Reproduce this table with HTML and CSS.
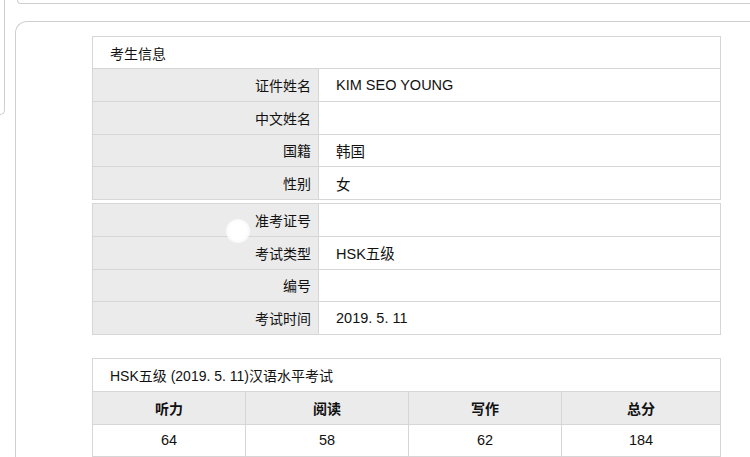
FILE: index.html
```html
<!DOCTYPE html>
<html lang="zh">
<head>
<meta charset="utf-8">
<title>考生信息</title>
<link rel="stylesheet" href="styles.css">
</head>
<body>
<div class="page">
  <div class="side-piece"></div>
  <div class="main">
    <div class="top-strip"></div>
    <div class="card">
      <table class="info">
        <colgroup><col class="lc"><col class="vc"></colgroup>
        <tr><th class="caption" colspan="2">考生信息</th></tr>
        <tr><td class="label">证件姓名</td><td class="value">KIM SEO YOUNG</td></tr>
        <tr><td class="label">中文姓名</td><td class="value"></td></tr>
        <tr><td class="label">国籍</td><td class="value">韩国</td></tr>
        <tr><td class="label">性别</td><td class="value">女</td></tr>
      </table>
      <table class="info info-second">
        <colgroup><col class="lc"><col class="vc"></colgroup>
        <tr><td class="label">准考证号</td><td class="value"></td></tr>
        <tr><td class="label">考试类型</td><td class="value">HSK五级</td></tr>
        <tr><td class="label">编号</td><td class="value"></td></tr>
        <tr><td class="label">考试时间</td><td class="value">2019. 5. 11</td></tr>
      </table>
      <table class="scores">
        <colgroup>
          <col class="c1"><col class="c2"><col class="c3"><col class="c4">
        </colgroup>
        <tr><th class="caption" colspan="4">HSK五级 (2019. 5. 11)汉语水平考试</th></tr>
        <tr class="head"><th>听力</th><th>阅读</th><th>写作</th><th>总分</th></tr>
        <tr class="data"><td>64</td><td>58</td><td>62</td><td>184</td></tr>
      </table>
      <div class="glare"></div>
    </div>
  </div>
</div>
</body>
</html>
```

FILE: styles.css
```css
html, body {
  margin: 0;
  padding: 0;
  background: #fff;
  overflow: hidden;
}
body {
  font-family: "Liberation Sans", Arial, "Noto Sans CJK SC", sans-serif;
  font-size: 14px;
  color: #111;
}
.page {
  display: flex;
  gap: 10px;
  width: 780px;
  height: 457px;
  overflow: hidden;
}
.side-piece {
  flex: none;
  width: 4px;
  height: 114px;
  border-right: 1px solid #cfcfcf;
  border-bottom: 1px solid #cfcfcf;
  border-bottom-right-radius: 6px;
}
.main {
  flex: 1;
  display: flex;
  flex-direction: column;
}
.top-strip {
  flex: none;
  height: 3px;
  margin-left: 2px;
  border-left: 1px solid #cfcfcf;
  border-bottom: 1px solid #cfcfcf;
  border-bottom-left-radius: 8px;
}
.card {
  flex: none;
  position: relative;
  box-sizing: border-box;
  margin-top: 17px;
  height: 436px;
  overflow: hidden;
  border-top: 1px solid #cfcfcf;
  border-left: 1px solid #cfcfcf;
  border-top-left-radius: 12px;
  padding: 14px 0 0 76px;
}
table {
  border-collapse: collapse;
  width: 628px;
  table-layout: fixed;
}
td, th {
  border: 1px solid #d6d6d6;
  padding: 0;
  height: 31.75px;
  font-weight: normal;
}
.value, .scores .data td {
  font-size: 14.5px;
}
.lc { width: 226px; }
.vc { width: 402px; }
.info .caption {
  height: 31px;
  text-align: left;
  padding-left: 17px;
  background: #fff;
}
.label {
  text-align: right;
  padding-right: 7px;
  background: #ebebeb;
}
.value {
  padding-left: 17px;
  background: #fff;
}
.info-second {
  margin-top: 3px;
}
.scores {
  margin-top: 23px;
}
.scores .caption {
  text-align: left;
  padding-left: 17px;
  background: #fff;
}
.scores .c1 { width: 153px; }
.scores .c2 { width: 163px; }
.scores .c3 { width: 153px; }
.scores .c4 { width: 159px; }
.scores .head th {
  background: #ebebeb;
  font-weight: bold;
  text-align: center;
}
.scores .data td {
  text-align: center;
  background: #fff;
}
.glare {
  position: absolute;
  left: 210px;
  top: 197px;
  width: 24px;
  height: 24px;
  border-radius: 50%;
  background: radial-gradient(circle, #fff 0%, #fff 50%, rgba(255,255,255,0.6) 75%, rgba(255,255,255,0) 100%);
}
```
